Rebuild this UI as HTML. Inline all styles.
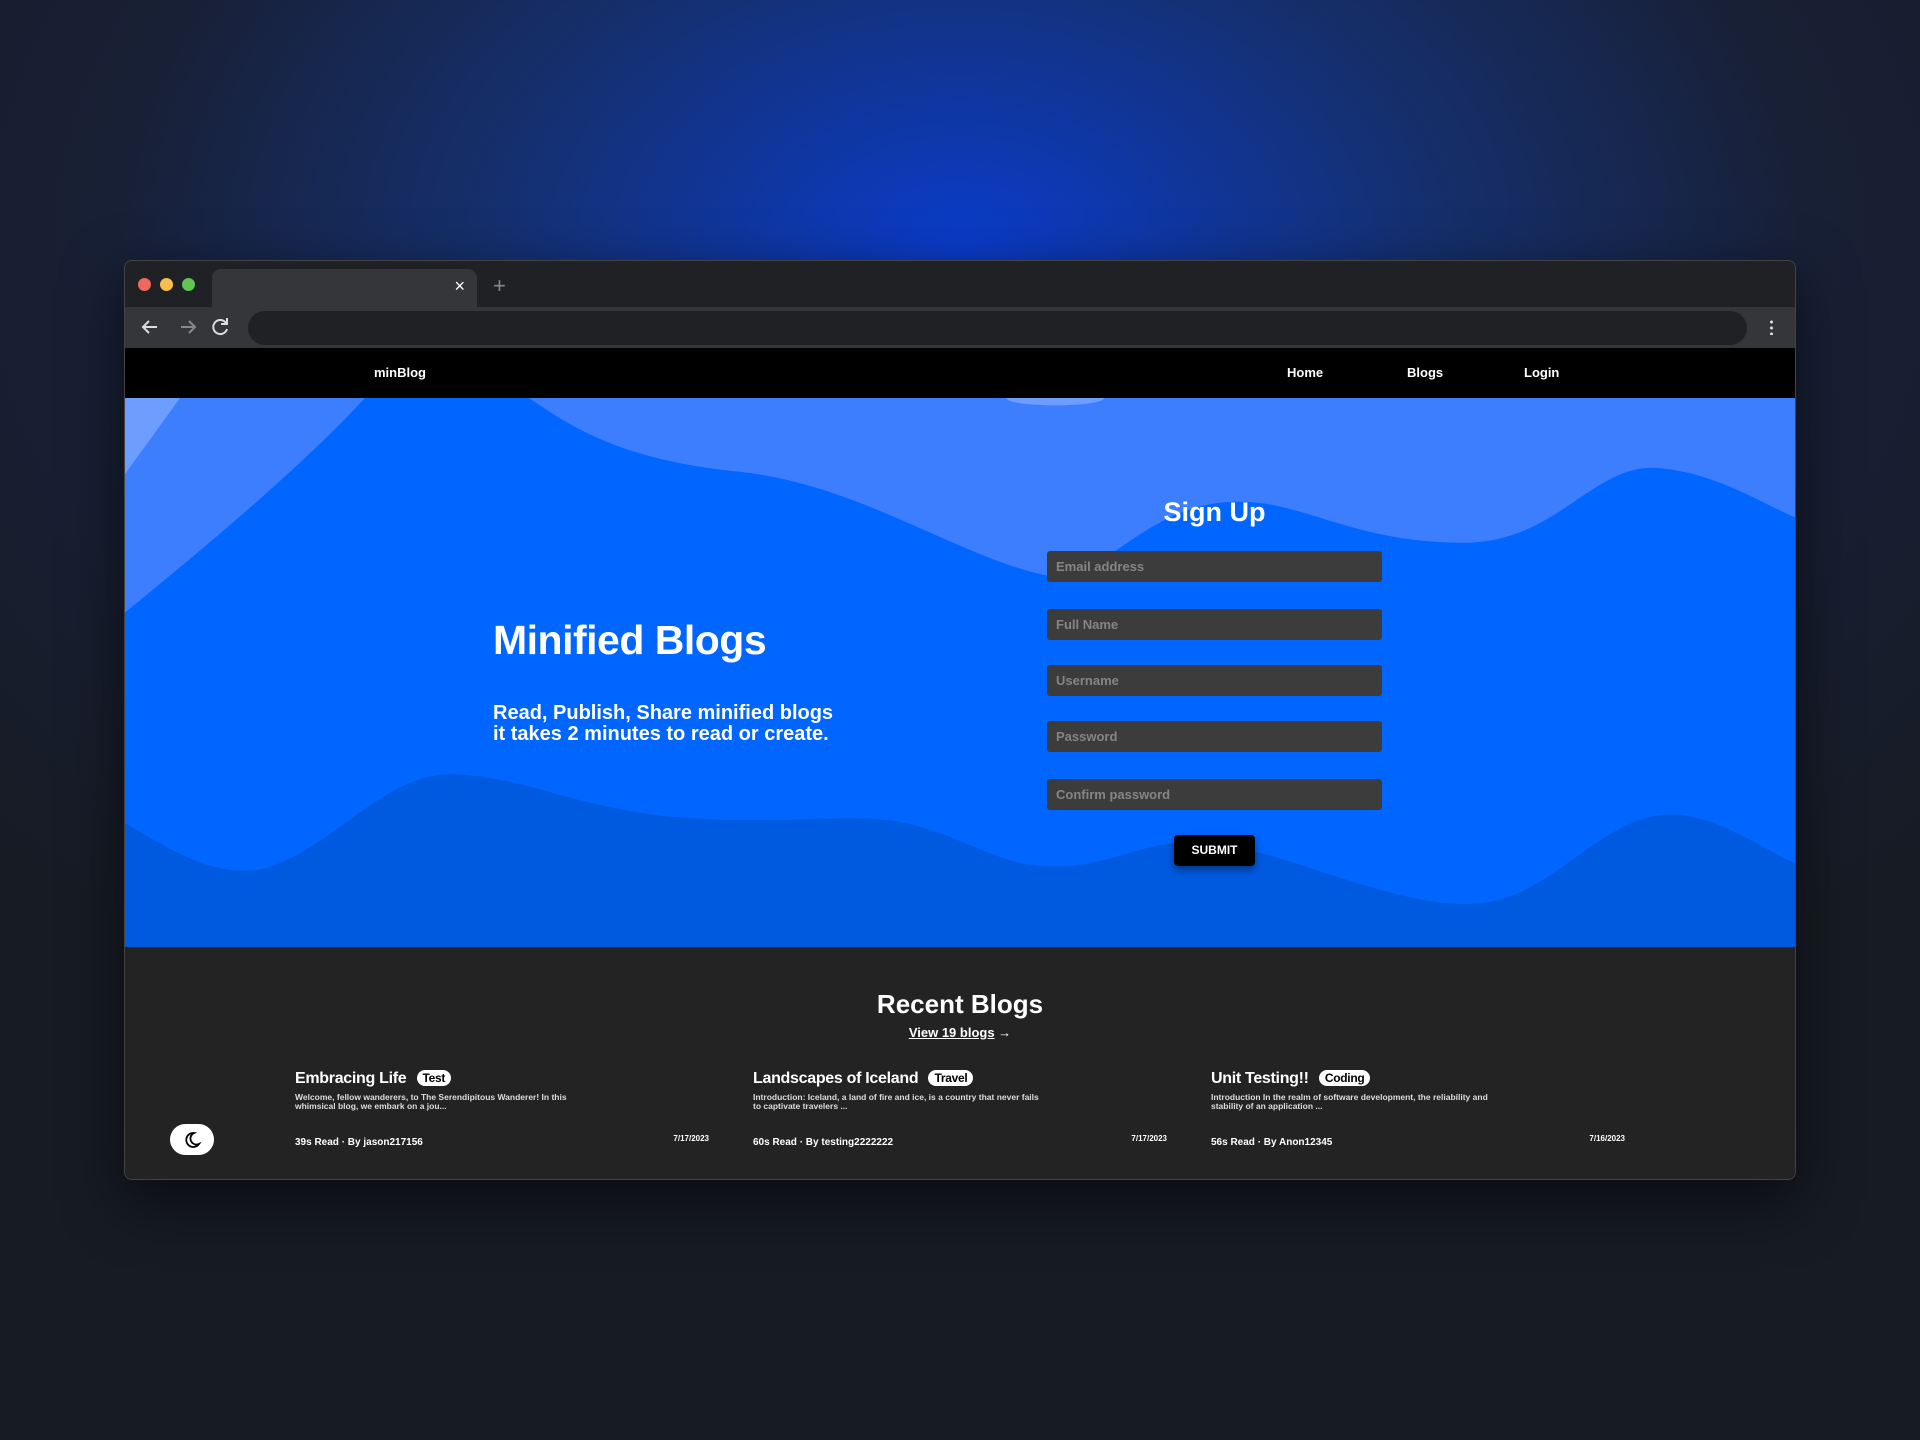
<!DOCTYPE html>
<html><head><meta charset="utf-8"><style>
*{margin:0;padding:0;box-sizing:border-box}
body{width:1920px;height:1440px;overflow:hidden;font-family:"Liberation Sans",sans-serif;
background:radial-gradient(ellipse 1300px 900px at 960px 250px,#0a3ccc 0%,#153070 35%,#182036 65%,#171b24 100%);position:relative}
.win{position:absolute;left:124px;top:260px;width:1672px;height:920px;border-radius:8px;overflow:hidden;background:#202124;box-shadow:0 20px 60px rgba(0,0,0,.6);border:1px solid #444}
.tabbar{position:absolute;left:0;top:0;width:100%;height:46px;background:#202124}
.dot{position:absolute;top:17px;width:13px;height:13px;border-radius:50%}
.tab{position:absolute;left:87px;top:8px;width:265px;height:38px;background:#35363a;border-radius:9px 9px 0 0}
.toolbar{position:absolute;left:0;top:46px;width:100%;height:41px;background:#35363a}
.addr{position:absolute;left:123px;top:4px;width:1499px;height:34px;border-radius:17px;background:#202124}
.nav{position:absolute;left:0;top:87px;width:100%;height:50px;background:#000;color:#fff;font-weight:bold;font-size:13px}
.nav span{position:absolute;top:17px}
.hero{position:absolute;left:0;top:137px;width:100%;height:549px;background:#3d7eff;overflow:hidden}
.foot{position:absolute;left:0;top:686px;width:100%;height:234px;background:#232323;color:#fff}
input{position:absolute;left:922px;width:335px;height:31px;background:#3c3c3c;border:none;border-radius:3px;padding-left:9px;font:bold 13px "Liberation Sans",sans-serif;color:#888}
input::placeholder{color:#858585}
.card{position:absolute;top:123px;width:414px}
.card h3{font-size:16px;font-weight:bold;letter-spacing:-.3px}
.tag{display:inline-block;background:#fff;color:#000;border-radius:9px;font-size:12px;padding:1px 6px;margin-left:6px;vertical-align:1px}
.card p{font-size:8.5px;line-height:9px;width:295px;margin-top:5px;font-weight:bold;color:#ddd}
.meta{position:absolute;top:67px;left:0;font-size:10px;font-weight:bold}
.date{position:absolute;top:64px;right:0;font-size:8px;font-weight:bold}
</style></head><body>
<div class="win">
 <div class="tabbar">
  <div class="dot" style="left:13px;background:#ee6a5f"></div>
  <div class="dot" style="left:35px;background:#f5be4f"></div>
  <div class="dot" style="left:57px;background:#61c454"></div>
  <div class="tab"><span style="position:absolute;right:12px;top:7px;color:#fff;font-size:18px">×</span></div>
  <span style="position:absolute;left:368px;top:12px;color:#888;font-size:22px">+</span>
 </div>
 <div class="toolbar">
  <svg width="120" height="41" style="position:absolute;left:0;top:0" fill="none" stroke-width="2">
   <path d="M32 20H18M24 14l-6 6 6 6" stroke="#ddd"/>
   <path d="M56 20h14M64 14l6 6-6 6" stroke="#888"/>
   <path d="M101 16a7 7 0 1 0 1 6" stroke="#ddd"/><path d="M102 11v6h-6" stroke="#ddd"/>
  </svg>
  <div class="addr"></div>
  <div style="position:absolute;right:22px;top:12px;width:3px;height:16px;background:radial-gradient(circle,#ddd 1.4px,transparent 1.6px) 0 0/3px 6px"></div>
 </div>
 <div class="nav"><span style="left:249px">minBlog</span><span style="left:1162px">Home</span><span style="left:1282px">Blogs</span><span style="left:1399px">Login</span></div>
 <div class="hero">
  <svg width="1672" height="549" viewBox="0 0 1366 448" preserveAspectRatio="none" style="position:absolute;left:0;top:0">
   <path d="M0,0 L45,0 L0,62Z" fill="#6c9dff"/>
   <ellipse cx="760" cy="0" rx="40" ry="6" fill="#6c9dff"/>
   <path d="M0,175 C80,110 150,50 196,0 L330,0 C360,20 400,50 500,60 C600,70 680,130 754,145 C800,150 830,90 900,85 C960,80 1000,120 1100,118 C1170,115 1200,55 1250,57 C1300,60 1340,88 1366,98 L1366,448 L0,448 Z" fill="#0066ff"/>
   <path d="M0,347 C40,370 70,390 110,385 C170,370 210,305 270,307 C330,310 370,335 450,342 C550,350 600,335 650,350 C700,365 720,385 770,382 C820,378 840,355 900,365 C960,375 1050,420 1110,412 C1170,405 1210,335 1270,340 C1310,345 1340,370 1366,380 L1366,448 L0,448Z" fill="#005ae0"/>
  </svg>
  <div style="position:absolute;left:368px;top:219px;color:#fff;font-weight:bold;font-size:41px;letter-spacing:-.5px">Minified Blogs</div>
  <div style="position:absolute;left:368px;top:305px;color:#fff;font-weight:bold;font-size:20px;line-height:21px">Read, Publish, Share minified blogs<br>it takes 2 minutes to read or create.</div>
  <div style="position:absolute;left:922px;width:335px;top:99px;text-align:center;color:#fff;font-weight:bold;font-size:27px">Sign Up</div>
  <input style="top:153px" placeholder="Email address">
  <input style="top:211px" placeholder="Full Name">
  <input style="top:267px" placeholder="Username">
  <input style="top:323px" placeholder="Password">
  <input style="top:381px" placeholder="Confirm password">
  <div style="position:absolute;left:1049px;top:437px;width:81px;height:31px;background:#000;border-radius:4px;color:#fff;font-size:12px;font-weight:bold;text-align:center;line-height:31px;box-shadow:0 4px 8px rgba(0,0,0,.4)">SUBMIT</div>
 </div>
 <div class="foot">
  <div style="position:absolute;left:0;width:100%;top:42px;text-align:center;font-size:26px;font-weight:bold">Recent Blogs</div>
  <div style="position:absolute;left:0;width:100%;top:78px;text-align:center;font-size:13px;font-weight:bold"><u>View 19 blogs</u> →</div>
  <div class="card" style="left:170px"><h3>Embracing Life <span class="tag">Test</span></h3><p>Welcome, fellow wanderers, to The Serendipitous Wanderer! In this whimsical blog, we embark on a jou...</p><div class="meta">39s Read · By jason217156</div><div class="date">7/17/2023</div></div>
  <div class="card" style="left:628px"><h3>Landscapes of Iceland <span class="tag">Travel</span></h3><p>Introduction: Iceland, a land of fire and ice, is a country that never fails to captivate travelers ...</p><div class="meta">60s Read · By testing2222222</div><div class="date">7/17/2023</div></div>
  <div class="card" style="left:1086px"><h3>Unit Testing!! <span class="tag">Coding</span></h3><p>Introduction In the realm of software development, the reliability and stability of an application ...</p><div class="meta">56s Read · By Anon12345</div><div class="date">7/16/2023</div></div>
  <div style="position:absolute;left:45px;top:177px;width:44px;height:31px;border-radius:16px;background:#fff">
   <svg width="44" height="31" viewBox="0 0 44 31"><path d="M24 9a7 7 0 1 0 5 11a6 6 0 0 1-5-11z" fill="none" stroke="#000" stroke-width="1.8"/></svg>
  </div>
 </div>
</div>
</body></html>
